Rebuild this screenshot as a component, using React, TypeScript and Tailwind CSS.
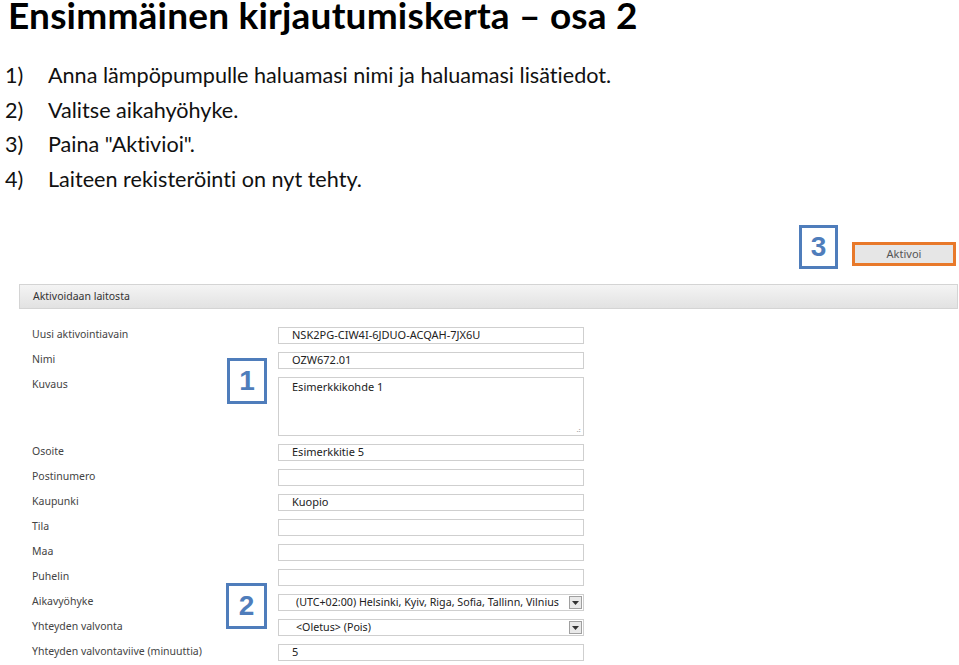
import React from "react";

const STEPS = [
  "Anna lämpöpumpulle haluamasi nimi ja haluamasi lisätiedot.",
  "Valitse aikahyöhyke.",
  'Paina "Aktivioi".',
  "Laiteen rekisteröinti on nyt tehty.",
];

type Field = {
  label: string;
  value?: string;
  kind?: "input" | "textarea" | "select";
};

const FIELDS: Field[] = [
  { label: "Uusi aktivointiavain", value: "NSK2PG-CIW4I-6JDUO-ACQAH-7JX6U" },
  { label: "Nimi", value: "OZW672.01" },
  { label: "Kuvaus", value: "Esimerkkikohde 1", kind: "textarea" },
  { label: "Osoite", value: "Esimerkkitie 5" },
  { label: "Postinumero" },
  { label: "Kaupunki", value: "Kuopio" },
  { label: "Tila" },
  { label: "Maa" },
  { label: "Puhelin" },
  {
    label: "Aikavyöhyke",
    value: "(UTC+02:00) Helsinki, Kyiv, Riga, Sofia, Tallinn, Vilnius",
    kind: "select",
  },
  { label: "Yhteyden valvonta", value: "<Oletus> (Pois)", kind: "select" },
  { label: "Yhteyden valvontaviive (minuuttia)", value: "5" },
];

function Callout({ n, className }: { n: string; className: string }) {
  return (
    <div
      className={`flex items-center justify-center border-[3px] border-[#4f7dbb] bg-white text-[28px] font-bold text-[#4f7dbb] ${className}`}
      style={{ fontFamily: "'Liberation Sans', Arial, sans-serif" }}
    >
      {n}
    </div>
  );
}

function Control({ f }: { f: Field }) {
  if (f.kind === "textarea") {
    return (
      <div className="relative h-[59px] w-[306px] border border-[#cfcfcf] bg-white pl-[13px] pt-[1px] text-[#222]">
        {f.value}
        <span className="absolute bottom-[1px] right-[2px] text-[7px] leading-none text-[#aaa]">⠴</span>
      </div>
    );
  }
  if (f.kind === "select") {
    return (
      <div className="flex h-[17px] w-[306px] items-center border border-[#cfcfcf] bg-white pl-[17px] pr-[1px] text-[10.7px] text-[#222]">
        <span className="flex-1 truncate">{f.value}</span>
        <span className="flex h-[13px] w-[13px] items-center justify-center border border-[#a0a0a0] bg-[#e9e9e9]">
          <svg width="7" height="4" viewBox="0 0 7 4">
            <path d="M0 0h7L3.5 4z" fill="#333" />
          </svg>
        </span>
      </div>
    );
  }
  return (
    <div className="flex h-[17px] w-[306px] items-center border border-[#cfcfcf] bg-white pl-[13px] text-[#222]">
      {f.value}
    </div>
  );
}

export default function App() {
  return (
    <div className="relative h-[665px] w-[959px] overflow-hidden bg-white text-black [font-variant-ligatures:none]">
      <h1
        className="pl-[8px] text-[37px] font-bold leading-[30px] tracking-[0.2px]"
        style={{ fontFamily: "Lato, 'Liberation Sans', sans-serif" }}
      >
        Ensimmäinen kirjautumiskerta – osa 2
      </h1>

      <ol
        className="mt-[28px] flex flex-col pl-[5px] text-[21.6px] leading-[34.5px] text-[#111]"
        style={{ fontFamily: "Lato, 'Liberation Sans', sans-serif" }}
      >
        {STEPS.map((s, i) => (
          <li key={i} className="flex">
            <span className="w-[43px]">{i + 1})</span>
            <span>{s}</span>
          </li>
        ))}
      </ol>

      {/* step 3: activate */}
      <div className="mt-[29px] flex items-end justify-end gap-[14px] pr-[3px]">
        <Callout n="3" className="h-[44px] w-[39px]" />
        <div
          className="mb-[3px] flex h-[24px] w-[104px] items-center justify-center border-[3px] border-[#e8792a] bg-[#e6e6e6] text-[11px] text-[#555]"
          style={{ fontFamily: "'Noto Sans', 'Open Sans', sans-serif" }}
        >
          Aktivoi
        </div>
      </div>

      <div
        className="relative ml-[19px] mt-[15px] w-[939px] text-[11px] text-[#444]"
        style={{ fontFamily: "'Noto Sans', 'Open Sans', sans-serif" }}
      >
        <div className="flex h-[25px] items-center border border-[#d4d4d4] bg-gradient-to-b from-[#f4f4f4] to-[#e2e2e2] pl-[13px] text-[10.5px] text-[#333]">
          Aktivoidaan laitosta
        </div>

        <div className="mt-[18px] flex flex-col gap-[8px]">
          {FIELDS.map((f) => (
            <div key={f.label} className="flex items-start">
              <div className="w-[259px] pl-[13px] text-[10.5px] leading-[14px]">{f.label}</div>
              <Control f={f} />
            </div>
          ))}
        </div>

        <Callout n="1" className="absolute left-[208px] top-[74px] h-[46px] w-[40px]" />
        <Callout n="2" className="absolute left-[207px] top-[299px] h-[46px] w-[41px]" />
      </div>
    </div>
  );
}
